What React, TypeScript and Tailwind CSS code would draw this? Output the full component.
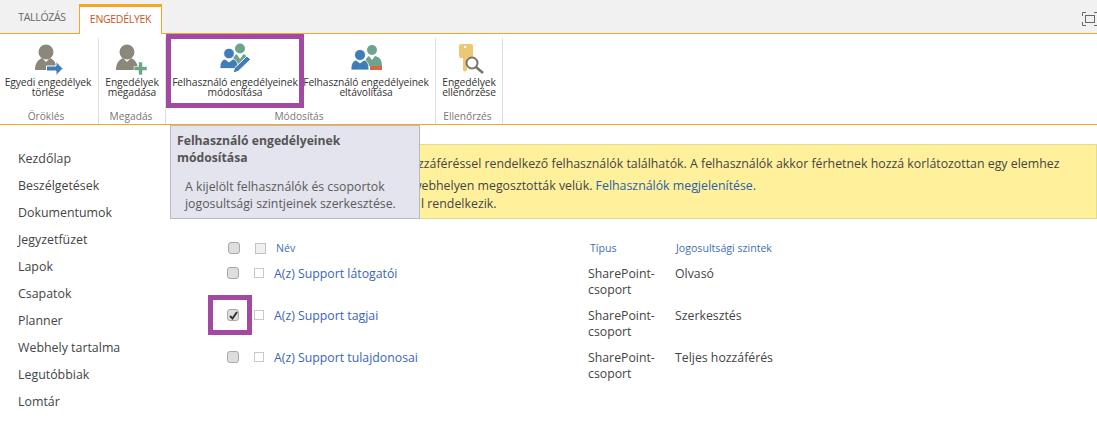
import React from "react";

const PersonGray = ({ cx }: { cx: number }) => (
  <>
    <circle cx={cx} cy="9" r="7.5" fill="#8b877b" />
    <path d={`M${cx - 11} 27 C${cx - 11} 20 ${cx - 8} 17 ${cx - 4} 15 L${cx} 19 L${cx + 4} 15 C${cx + 8} 17 ${cx + 11} 20 ${cx + 11} 27 Z`} fill="#8b877b" />
  </>
);

const ResetIcon = () => (
  <svg width="30" height="33" viewBox="0 0 30 33">
    <PersonGray cx={13} />
    <path d="M13.5 23 H23 V18.5 L30 25.5 L23 32.5 V28 H13.5 Z" fill="#3f7cb8" stroke="#fff" strokeWidth="1" />
  </svg>
);

const GrantIcon = () => (
  <svg width="32" height="33" viewBox="0 0 32 33">
    <PersonGray cx={11} />
    <path d="M22.5 19 H26.5 V23.5 H31 V27.5 H26.5 V32 H22.5 V27.5 H18 V23.5 H22.5 Z" fill="#6da58c" stroke="#fff" strokeWidth="0.6" />
  </svg>
);

const EditIcon = () => (
  <svg width="32" height="32" viewBox="0 0 32 32">
    <circle cx="21" cy="5.5" r="5" fill="#6da58c" />
    <path d="M14 19 C14 14 16 12 17.5 11 L21 16 L24.5 11 C27 12 29 14 29 18 L22 24 Z" fill="#6da58c" />
    <circle cx="10" cy="10.5" r="5.3" fill="#3f7cb8" stroke="#fff" strokeWidth="0.8" />
    <path d="M1 25.5 C1 19 3 17 6 16 L10 19 L14 16 C17 17 19 19 19 25.5 Z" fill="#3f7cb8" stroke="#fff" strokeWidth="0.8" />
    <path d="M14 30 L15.5 25 L28 13 L31.5 16.5 L19 28.5 Z" fill="#3f7cb8" stroke="#fff" strokeWidth="1" />
  </svg>
);

const RemoveIcon = () => (
  <svg width="32" height="32" viewBox="0 0 32 32">
    <circle cx="22" cy="7" r="5" fill="#6da58c" />
    <path d="M15 23 C15 16 17 14 19 13 L22 17 L25 13 C29 14 32 16 32 23 Z" fill="#6da58c" />
    <circle cx="10" cy="12" r="5.5" fill="#3f7cb8" stroke="#fff" strokeWidth="0.8" />
    <path d="M1 27 C1 20 3 18 6 17 L10 20 L14 17 C17 18 19 20 19 27 Z" fill="#3f7cb8" stroke="#fff" strokeWidth="0.8" />
    <rect x="20" y="23" width="12" height="4" fill="#d9663f" />
  </svg>
);

const CheckIcon = () => (
  <svg width="32" height="32" viewBox="0 0 32 32">
    <path d="M6 3 Q6 1 8 1 H18 Q20 1 20 3 V13 Q20 15 18 15 H14 V27 Q12 30 10 27 V15 H8 Q6 15 6 13 Z" fill="#ecc873" />
    <circle cx="12" cy="4" r="1.2" fill="#fff" />
    <circle cx="19" cy="20" r="5.5" fill="#fff" stroke="#77746a" strokeWidth="2" />
    <path d="M23 24 L30 30" stroke="#77746a" strokeWidth="2.6" />
  </svg>
);

const FocusIcon = () => (
  <svg width="16" height="14" viewBox="0 0 16 14" fill="none" stroke="#666" strokeWidth="1">
    <path d="M.5 4 V.5 H4 M12 .5 H15.5 V4 M15.5 10 V13.5 H12 M4 13.5 H.5 V10" />
    <rect x="3.5" y="3.5" width="9" height="7" />
  </svg>
);

const RibbonButton = ({ icon, lines, className }: { icon: React.ReactNode; lines: string[]; className: string }) => (
  <div className={`flex flex-col items-center pt-[9px] ${className}`}>
    <div className="h-[34px] flex items-start justify-center">{icon}</div>
    <div className="text-[10.3px] leading-[10px] text-[#333] text-center whitespace-nowrap tracking-[-0.1px]">
      {lines.map((l) => (
        <div key={l}>{l}</div>
      ))}
    </div>
  </div>
);

const RibbonGroup = ({ label, className, labelClass, children }: { label: string; className: string; labelClass: string; children: React.ReactNode }) => (
  <div className={`flex flex-col border-r border-[#e1e1e1] mt-[4px] ${className}`}>
    <div className="flex-1 flex -mt-[4px]">{children}</div>
    <div className={`h-[17px] text-[10.2px] text-[#777] text-center leading-[18px] ${labelClass}`}>{label}</div>
  </div>
);

const BigBox = ({ checked }: { checked?: boolean }) => (
  <span className="relative block w-[12px] h-[12px] rounded-[3px] bg-[#dedede] border border-[#a8a8a8]">
    {checked && (
      <svg className="absolute left-0 top-0" width="11" height="11" viewBox="0 0 11 11">
        <path d="M2 6 L4.5 8.5 L9 2" fill="none" stroke="#333" strokeWidth="2" />
      </svg>
    )}
  </span>
);

const SmallBox = () => <span className="block w-[10px] h-[10px] border border-[#c9c9c9] bg-white" />;

const navItems = [
  "Kezdőlap",
  "Beszélgetések",
  "Dokumentumok",
  "Jegyzetfüzet",
  "Lapok",
  "Csapatok",
  "Planner",
  "Webhely tartalma",
  "Legutóbbiak",
  "Lomtár",
];

const rows = [
  { name: "A(z) Support látogatói", level: "Olvasó" },
  { name: "A(z) Support tagjai", level: "Szerkesztés", checked: true },
  { name: "A(z) Support tulajdonosai", level: "Teljes hozzáférés" },
];

const App = () => {
  return (
    <div className="relative w-[1097px] h-[421px] overflow-hidden bg-white font-['Open_Sans',sans-serif]">
      {/* tabs */}
      <div className="h-[34px] bg-[#f1f1f1] border-b border-[#f5a623] flex items-end justify-between">
        <div className="flex items-end pl-[8px]">
          <div className="w-[71px] h-[29px] pr-[3px] text-center text-[10.5px] tracking-[-0.3px] leading-[27px] text-[#666]">TALLÓZÁS</div>
          <div className="w-[83px] h-[30px] -mb-px bg-white border-x border-[#f5a623] border-t-[3px] text-center text-[10.5px] tracking-[-0.3px] leading-[25px] text-[#c5561b]">
            ENGEDÉLYEK
          </div>
        </div>
        <div className="mb-[7px] w-[15px] overflow-hidden">
          <FocusIcon />
        </div>
      </div>

      {/* ribbon */}
      <div className="h-[91px] border-b border-[#f5a623] flex">
        <RibbonGroup label="Öröklés" labelClass="pr-[6px]" className="w-[99px]">
          <RibbonButton className="w-[96px]" icon={<ResetIcon />} lines={["Egyedi engedélyek", "törlése"]} />
        </RibbonGroup>
        <RibbonGroup label="Megadás" labelClass="pr-[2px]" className="w-[67px]">
          <RibbonButton className="w-[66px]" icon={<GrantIcon />} lines={["Engedélyek", "megadása"]} />
        </RibbonGroup>
        <RibbonGroup label="Módosítás" labelClass="pr-[3px]" className="w-[270px]">
          <RibbonButton className="w-[138px]" icon={<EditIcon />} lines={["Felhasználó engedélyeinek", "módosítása"]} />
          <RibbonButton className="w-[124px]" icon={<RemoveIcon />} lines={["Felhasználó engedélyeinek", "eltávolítása"]} />
        </RibbonGroup>
        <RibbonGroup label="Ellenőrzés" labelClass="pr-[3px]" className="w-[67px]">
          <RibbonButton className="w-[66px]" icon={<CheckIcon />} lines={["Engedélyek", "ellenőrzése"]} />
        </RibbonGroup>
      </div>

      {/* body */}
      <div className="flex">
        <nav className="w-[170px] pl-[18px] pt-[20px] shrink-0">
          {navItems.map((n) => (
            <div key={n} className="h-[27px] text-[12.4px] leading-[27px] text-[#444]">
              {n}
            </div>
          ))}
        </nav>
        <main className="flex-1 min-w-0">
          <div className="mt-[19px] h-[75px] bg-[#fff09c] border border-[#e2dc8c] pt-[9px] text-[12.35px] text-[#444] whitespace-nowrap overflow-hidden">
            <div className="h-[22px] leading-[20px] pl-[247px]">
              zzáféréssel rendelkező felhasználók találhatók. A felhasználók akkor férhetnek hozzá korlátozottan egy elemhez
            </div>
            <div className="h-[18px] leading-[19px] pl-[241px]">
              webhelyen megosztották velük. <span className="text-[#2b5fa8]">Felhasználók megjelenítése.</span>
            </div>
            <div className="leading-[20px] pl-[250px]">l rendelkezik.</div>
          </div>

          <div className="mt-[20px] ml-[57px] grid grid-cols-[27px_22px_314px_86px_1fr]">
            <div className="h-[18px] pl-[1px] flex items-center"><BigBox /></div>
            <div className="h-[18px] pl-[1px] flex items-center"><span className="block w-[11px] h-[11px] border border-[#c4c4c4] bg-[#efefef]" /></div>
            <div className="text-[10.6px] leading-[18px] text-[#3f6fb5]">Név</div>
            <div className="text-[10.6px] leading-[18px] text-[#3f6fb5]">Típus</div>
            <div className="text-[10.6px] leading-[18px] text-[#3f6fb5]">Jogosultsági szintek</div>
            {rows.map((r) => (
              <React.Fragment key={r.name}>
                <div className="h-[42px] pt-[10px]"><BigBox checked={r.checked} /></div>
                <div className="h-[42px] pt-[11px]"><SmallBox /></div>
                <div className="text-[12.3px] leading-[18px] pt-[8px] -ml-[2px] text-[#3a66b4]">{r.name}</div>
                <div className="text-[12.3px] leading-[16px] pt-[9px] -ml-[2px] text-[#444]">SharePoint-<br />csoport</div>
                <div className="text-[12.3px] leading-[18px] pt-[8px] -ml-[1px] text-[#444]">{r.level}</div>
              </React.Fragment>
            ))}
          </div>
        </main>
      </div>

      {/* highlight marks */}
      <div className="absolute left-[166px] top-[34px] w-[138px] h-[74px] border-[5px] border-[#a349a4]" />
      <div className="absolute left-[208px] top-[295px] w-[44px] h-[40px] border-[5px] border-[#a349a4]" />

      {/* tooltip */}
      <div className="absolute left-[170px] top-[125px] w-[250px] h-[94px] bg-[#e4e4ee] border border-[#b9b9c0] text-[#5a5a5a] pl-[6px]">
        <div className="text-[12.2px] font-bold leading-[17px] pt-[6px] text-[#555]">Felhasználó engedélyeinek<br />módosítása</div>
        <div className="text-[12.3px] leading-[17px] mt-[12px] pl-[8px] whitespace-nowrap">A kijelölt felhasználók és csoportok<br />jogosultsági szintjeinek szerkesztése.</div>
      </div>
    </div>
  );
};

export default App;
